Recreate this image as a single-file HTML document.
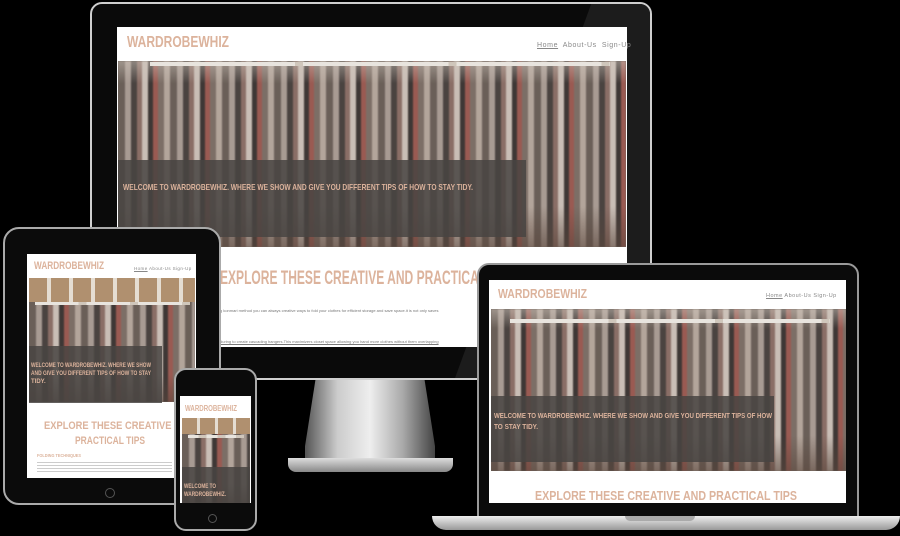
<!DOCTYPE html>
<html><head><meta charset="utf-8"><style>
*{margin:0;padding:0;box-sizing:border-box}
body{width:900px;height:536px;background:#000;position:relative;overflow:hidden;font-family:"Liberation Sans",sans-serif}
.a{position:absolute}
svg.t{position:absolute;overflow:visible}
svg.t text{font-family:"Liberation Sans",sans-serif;font-weight:bold;fill:#dcb39c}
.photo{overflow:hidden;background:#6f655e}
.photo::before{content:"";position:absolute;inset:0;filter:blur(.8px);background:
 linear-gradient(180deg,rgba(210,200,190,.5) 0,rgba(0,0,0,0) 12%,rgba(0,0,0,0) 78%,rgba(90,70,60,.6) 100%),
 repeating-linear-gradient(90deg,#6a5f58 0 7px,#a89b93 7px 13px,#4a4340 13px 19px,#8a6e66 19px 24px,#c9beb6 24px 30px,#3e3735 30px 35px,#9a5a52 35px 40px,#7c6e66 40px 46px,#b3a59b 46px 52px)}
.lights{background:repeating-linear-gradient(90deg,#e8e4de 0 calc(33.3% - 8px),#cfc6bb calc(33.3% - 8px) 33.3%)}
.band{background:rgba(72,68,66,.85)}
.nav{font-size:7px;color:#888;letter-spacing:.6px;white-space:nowrap}
</style></head><body>
<!-- monitor -->
<div class="a" style="left:90px;top:2px;width:562px;height:378px;border-radius:12px;background:#0a0a0a;border:2px solid #cfcfcf;overflow:hidden"><div style="position:absolute;left:430px;top:0;width:200px;height:380px;background:#1c1c1c;transform:skewX(-20deg)"></div></div>
<div class="a" style="left:117px;top:27px;width:510px;height:320px;background:#fff"></div>
<svg class="t" style="left:127px;top:33px" width="102" height="18"><text x="0" y="14" font-size="16" textLength="102" lengthAdjust="spacingAndGlyphs">WARDROBEWHIZ</text></svg>
<div class="a nav" style="left:537px;top:42px"><u>Home</u>&nbsp; About-Us&nbsp; Sign-Up</div>
<div class="a photo" style="left:118px;top:61px;width:508px;height:186px"></div>
<div class="a lights" style="left:150px;top:62px;width:460px;height:4px"></div>
<div class="a band" style="left:118px;top:160px;width:408px;height:77px"></div>
<svg class="t" style="left:123px;top:182px" width="350" height="10"><text x="0" y="8" font-size="8.5" textLength="350" lengthAdjust="spacingAndGlyphs">WELCOME TO WARDROBEWHIZ. WHERE WE SHOW AND GIVE YOU DIFFERENT TIPS OF HOW TO STAY TIDY.</text></svg>
<svg class="t" style="left:220px;top:266px" width="300" height="22"><text x="0" y="18" font-size="19" textLength="296" lengthAdjust="spacingAndGlyphs">EXPLORE THESE CREATIVE AND PRACTICAL TIPS</text></svg>
<div class="a" style="left:220px;top:308px;font-size:4px;color:#777;white-space:nowrap">g konmari method you can always creative ways to fold your clothes for efficient storage and save space.it is not only saves</div>
<div class="a" style="left:220px;top:339px;font-size:4px;color:#777;white-space:nowrap;text-decoration:underline">during to create cascading hangers.This maximizers closet space allowing you hand more clothes without them overlapping</div>
<!-- stand -->
<div class="a" style="left:305px;top:380px;width:130px;height:78px;background:linear-gradient(90deg,#555,#ccc 25%,#eee 50%,#aaa 75%,#444);clip-path:polygon(8% 0,92% 0,100% 85%,100% 100%,0 100%,0 85%)"></div>
<div class="a" style="left:288px;top:458px;width:165px;height:14px;border-radius:0 0 8px 8px;background:linear-gradient(#ddd,#888)"></div>
<!-- tablet -->
<div class="a" style="left:3px;top:227px;width:218px;height:278px;border-radius:16px;background:#0b0b0b;border:2px solid #aaa"></div>
<div class="a" style="left:27px;top:254px;width:169px;height:224px;background:#fff"></div>
<svg class="t" style="left:34px;top:259px" width="70" height="12"><text x="0" y="10" font-size="11" textLength="70" lengthAdjust="spacingAndGlyphs">WARDROBEWHIZ</text></svg>
<div class="a" style="left:134px;top:266px;font-size:4.5px;color:#888;white-space:nowrap;letter-spacing:.4px"><u>Home</u> About-Us Sign-Up</div>
<div class="a photo" style="left:29px;top:278px;width:166px;height:124px"></div>
<div class="a" style="left:29px;top:278px;width:166px;height:24px;background:repeating-linear-gradient(90deg,#b0906f 0 18px,#e5ddd2 18px 22px)"></div>
<div class="a lights" style="left:35px;top:302px;width:155px;height:3px"></div>
<div class="a band" style="left:29px;top:346px;width:133px;height:57px"></div>
<svg class="t" style="left:31px;top:361px" width="125" height="30"><text font-size="6"><tspan x="0" y="6" textLength="120" lengthAdjust="spacingAndGlyphs">WELCOME TO WARDROBEWHIZ. WHERE WE SHOW</tspan><tspan x="0" y="14" textLength="120" lengthAdjust="spacingAndGlyphs">AND GIVE YOU DIFFERENT TIPS OF HOW TO STAY</tspan><tspan x="0" y="22">TIDY.</tspan></text></svg>
<svg class="t" style="left:44px;top:418px" width="150" height="32"><text font-size="11"><tspan x="0" y="11" textLength="150" lengthAdjust="spacingAndGlyphs">EXPLORE THESE CREATIVE AND</tspan><tspan x="31" y="26" textLength="70" lengthAdjust="spacingAndGlyphs">PRACTICAL TIPS</tspan></text></svg>
<svg class="t" style="left:37px;top:452px" width="44" height="6"><text x="0" y="5" font-size="4.5" textLength="44" lengthAdjust="spacingAndGlyphs">FOLDING TECHNIQUES</text></svg>
<div class="a" style="left:37px;top:462px;width:135px;height:10px;background:repeating-linear-gradient(#ccc 0 1px,#fff 1px 3px)"></div>
<div class="a" style="left:105px;top:488px;width:10px;height:10px;border:1px solid #555;border-radius:50%"></div>
<!-- phone -->
<div class="a" style="left:174px;top:368px;width:83px;height:163px;border-radius:12px;background:#0b0b0b;border:2px solid #aaa"></div>
<div class="a" style="left:180px;top:396px;width:71px;height:107px;background:#fff"></div>
<svg class="t" style="left:185px;top:403px" width="52" height="9"><text x="0" y="8" font-size="8" textLength="52" lengthAdjust="spacingAndGlyphs">WARDROBEWHIZ</text></svg>
<div class="a photo" style="left:182px;top:418px;width:68px;height:85px"></div>
<div class="a" style="left:182px;top:418px;width:68px;height:16px;background:repeating-linear-gradient(90deg,#b0906f 0 15px,#e5ddd2 15px 18px)"></div>
<div class="a lights" style="left:188px;top:435px;width:56px;height:3px"></div>
<div class="a band" style="left:182px;top:467px;width:68px;height:36px"></div>
<svg class="t" style="left:184px;top:482px" width="62" height="20"><text font-size="6"><tspan x="0" y="6" textLength="32" lengthAdjust="spacingAndGlyphs">WELCOME TO</tspan><tspan x="0" y="14" textLength="42" lengthAdjust="spacingAndGlyphs">WARDROBEWHIZ.</tspan></text></svg>
<div class="a" style="left:208px;top:514px;width:9px;height:9px;border:1px solid #555;border-radius:50%"></div>
<!-- laptop -->
<div class="a" style="left:477px;top:263px;width:382px;height:256px;border-radius:12px 12px 0 0;background:#0b0b0b;border:2px solid #9a9a9a"></div>
<div class="a" style="left:489px;top:280px;width:357px;height:223px;background:#fff"></div>
<svg class="t" style="left:498px;top:286px" width="90" height="14"><text x="0" y="12" font-size="13" textLength="89" lengthAdjust="spacingAndGlyphs">WARDROBEWHIZ</text></svg>
<div class="a" style="left:766px;top:293px;font-size:5.5px;color:#888;white-space:nowrap;letter-spacing:.5px"><u>Home</u> About-Us Sign-Up</div>
<div class="a photo" style="left:491px;top:309px;width:355px;height:162px"></div>
<div class="a lights" style="left:510px;top:319px;width:320px;height:4px"></div>
<div class="a band" style="left:491px;top:396px;width:283px;height:66px"></div>
<svg class="t" style="left:494px;top:411px" width="280" height="24"><text font-size="7"><tspan x="0" y="7" textLength="278" lengthAdjust="spacingAndGlyphs">WELCOME TO WARDROBEWHIZ. WHERE WE SHOW AND GIVE YOU DIFFERENT TIPS OF HOW</tspan><tspan x="0" y="18" textLength="44" lengthAdjust="spacingAndGlyphs">TO STAY TIDY.</tspan></text></svg>
<svg class="t" style="left:535px;top:488px" width="263" height="14"><text x="0" y="12" font-size="13" textLength="262" lengthAdjust="spacingAndGlyphs">EXPLORE THESE CREATIVE AND PRACTICAL TIPS</text></svg>
<div class="a" style="left:432px;top:516px;width:468px;height:14px;border-radius:0 0 30px 30px;background:linear-gradient(#eee,#999)"></div>
<div class="a" style="left:625px;top:516px;width:70px;height:5px;border-radius:0 0 6px 6px;background:#aaa"></div>
</body></html>
